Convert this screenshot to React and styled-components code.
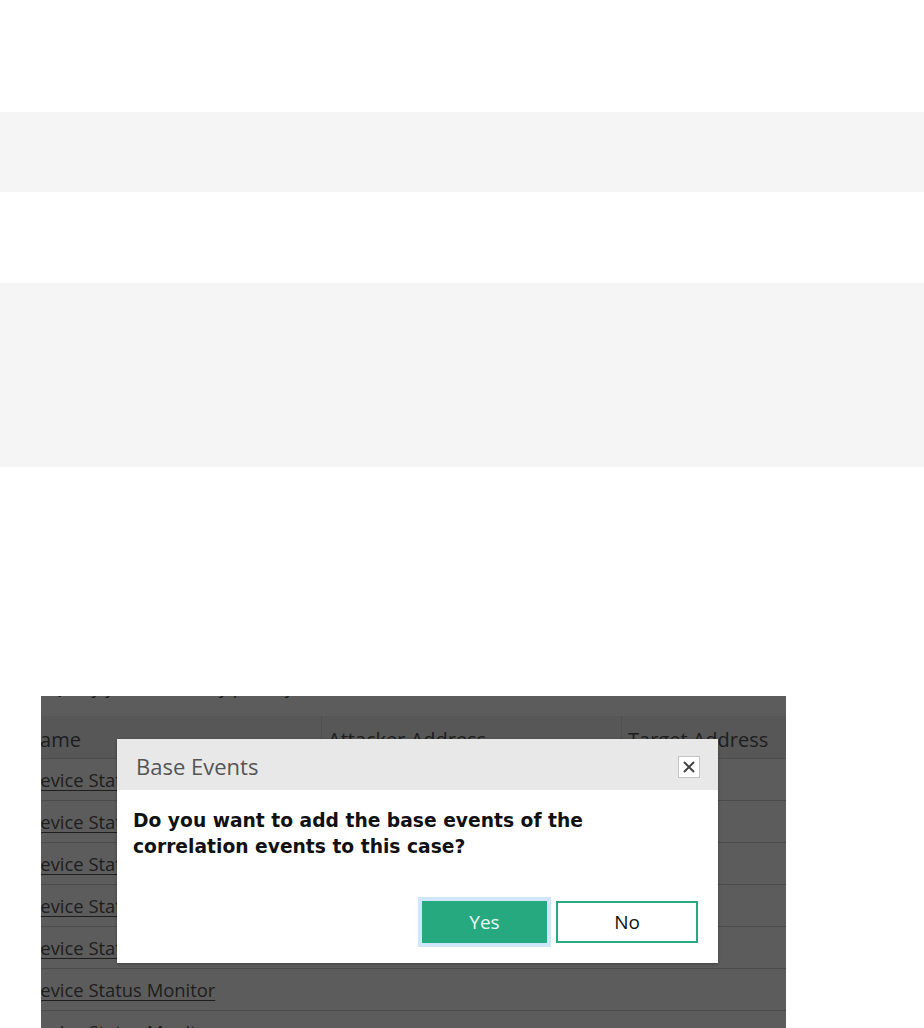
import React from "react"
import styled, { createGlobalStyle } from "styled-components"

const GlobalStyle = createGlobalStyle`
  body {
    margin: 0;
    background: #ffffff;
    font-family: "Open Sans", "Liberation Sans", sans-serif;
  }
`

const Page = styled.div`
  display: flex;
  flex-direction: column;
  padding-top: 112px;
`

const Band = styled.div`
  height: ${p => p.h}px;
  background: #f5f5f5;
`

const Space = styled.div`
  height: ${p => p.h}px;
`

const Shot = styled.div`
  position: relative;
  margin-left: 41px;
  width: 745px;
  height: 332px;
  overflow: hidden;
  background: #ffffff;
`

const Table = styled.div`
  margin-left: -22px;
  display: flex;
  flex-direction: column;
  font-size: 18.4px;
  color: #555;
`

const Caption = styled.div`
  height: 20px;
  line-height: 20px;
  padding-left: 30px;
  margin-top: -19px;
  font-size: 18px;
  color: #444;
  white-space: nowrap;
`

const HeadRow = styled.div`
  display: grid;
  grid-template-columns: 302px 300px 1fr;
  height: 42px;
  margin-top: 19px;
  background: #f0f0f0;
  border-bottom: 1px solid #d6d6d6;
`

const HeadCell = styled.div`
  display: flex;
  align-items: center;
  padding: 4px 0 0 6px;
  font-size: 20px;
  color: #555;
  border-left: ${p => (p.first ? "none" : "1px solid #dcdcdc")};
`

const Row = styled.div`
  height: 41px;
  display: flex;
  align-items: center;
  padding-left: 8px;
  border-bottom: 1px solid #cfcfcf;
`

const RowLink = styled.span`
  text-decoration: underline;
  text-underline-offset: 3px;
  color: #555;
`

const Overlay = styled.div`
  position: absolute;
  inset: 0;
  background: rgba(0, 0, 0, 0.64);
`

const Dialog = styled.div`
  position: absolute;
  left: 76px;
  top: 43px;
  width: 601px;
  height: 224px;
  background: #ffffff;
  display: flex;
  flex-direction: column;
  box-shadow: 0 1px 3px rgba(0, 0, 0, 0.3);
`

const DialogHead = styled.div`
  height: 51px;
  background: #e8e8e8;
  display: flex;
  align-items: center;
  justify-content: space-between;
  padding: 2px 18px 0 19px;
  box-sizing: border-box;
`

const Title = styled.span`
  font-size: 22px;
  color: #555;
`

const CloseButton = styled.button`
  width: 22px;
  height: 22px;
  padding: 0;
  margin-top: 3px;
  border: 1px solid #c4c4c4;
  background: #ffffff;
  display: flex;
  align-items: center;
  justify-content: center;
`

const Message = styled.p`
  margin: 0;
  padding: 18px 16px 0;
  font-family: "DejaVu Sans", "Open Sans", sans-serif;
  font-weight: bold;
  font-size: 18.7px;
  line-height: 26px;
  color: #111;
  flex: 1;
`

const Actions = styled.div`
  display: flex;
  justify-content: flex-end;
  gap: 9px;
  padding: 0 20px 20px;
`

const Button = styled.button`
  height: 42px;
  width: ${p => p.w}px;
  box-sizing: border-box;
  font-family: "Open Sans", "Liberation Sans", sans-serif;
  font-size: 19px;
  border-radius: 0;
  background: ${p => (p.primary ? "#27a97f" : "#ffffff")};
  color: ${p => (p.primary ? "#eaf7f1" : "#111")};
  border: ${p => (p.primary ? "none" : "2px solid #2aa980")};
  box-shadow: ${p => (p.primary ? "0 0 0 4px #cfe6fb" : "none")};
`

const rows = Array.from({ length: 7 }, () => "Device Status Monitor")

export default function App() {
  return (
    <>
      <GlobalStyle />
      <Page>
        <Band h={80} />
        <Space h={91} />
        <Band h={184} />
        <Space h={229} />
        <Shot>
          <Table>
            <Caption>Query your Events by priority</Caption>
            <HeadRow>
              <HeadCell first>Name</HeadCell>
              <HeadCell>Attacker Address</HeadCell>
              <HeadCell>Target Address</HeadCell>
            </HeadRow>
            {rows.map((r, i) => (
              <Row key={i}>
                <RowLink>{r}</RowLink>
              </Row>
            ))}
          </Table>
          <Overlay />
          <Dialog>
            <DialogHead>
              <Title>Base Events</Title>
              <CloseButton aria-label="Close">
                <svg width="14" height="14" viewBox="0 0 14 14">
                  <path d="M2 2 L12 12 M12 2 L2 12" stroke="#444" strokeWidth="2" />
                </svg>
              </CloseButton>
            </DialogHead>
            <Message>
              Do you want to add the base events of the
              <br />
              correlation events to this case?
            </Message>
            <Actions>
              <Button primary w={125}>Yes</Button>
              <Button w={142}>No</Button>
            </Actions>
          </Dialog>
        </Shot>
      </Page>
    </>
  )
}
